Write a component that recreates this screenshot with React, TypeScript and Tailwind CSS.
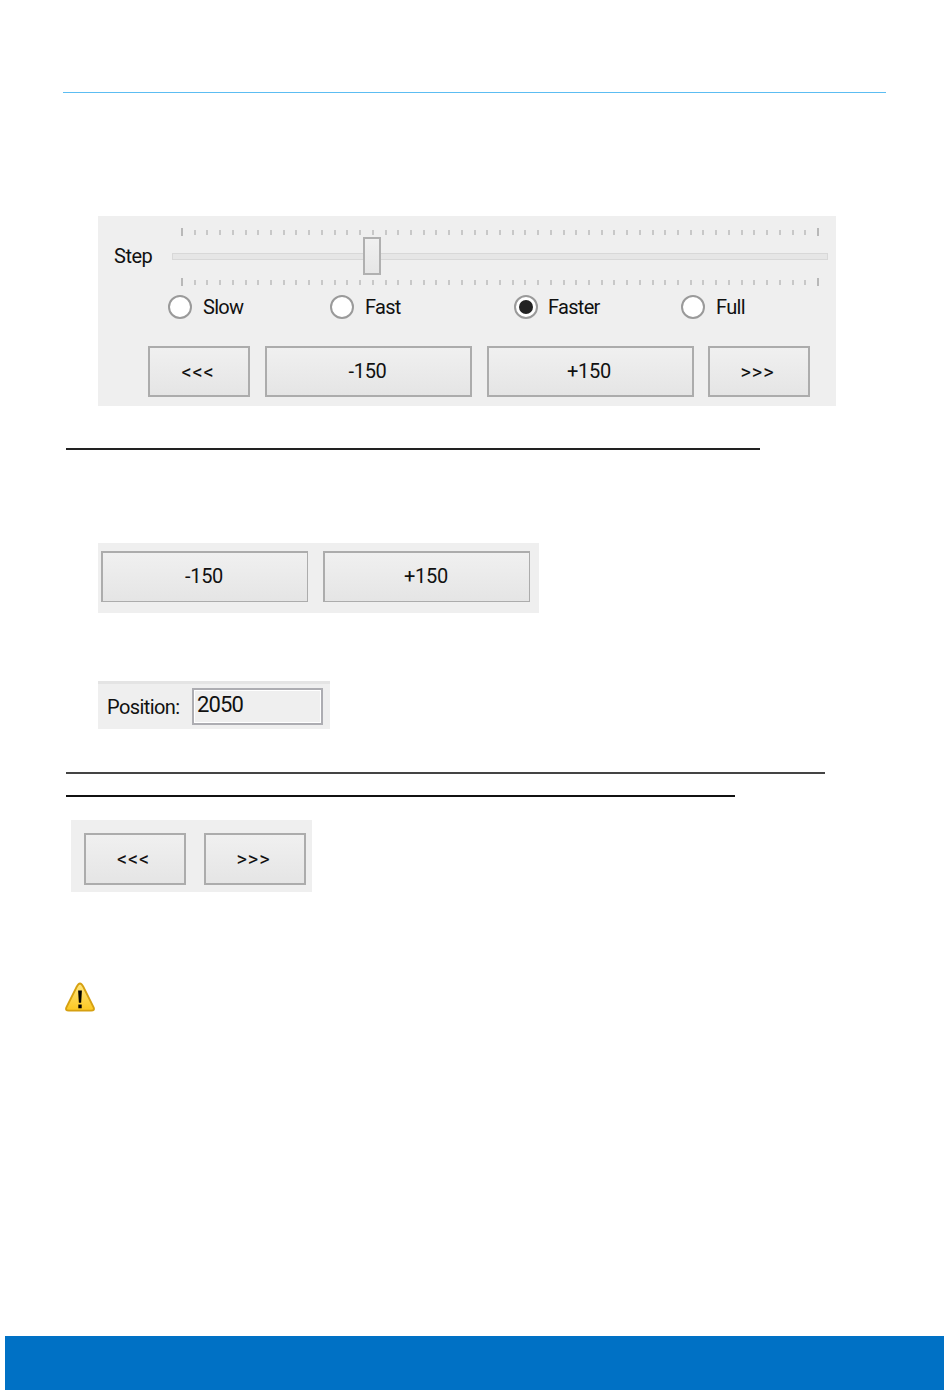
const font = "font-['Roboto',sans-serif]";

const Ticks = ({className}: {className: string}) => (
  <div className={`flex justify-between items-end px-[9px] ${className}`}>
    {Array.from({length: 51}).map((_, i) => (
      <span
        key={i}
        className={i === 0 || i === 50 ? "w-[2px] h-[8px] bg-[#b8b8b8]" : "w-[2px] h-[5px] mb-px bg-[#c8c8c8]"}
      />
    ))}
  </div>
);

const Radio = ({label, checked, className}: {label: string, checked?: boolean, className: string}) => (
  <div className={`flex items-center ${checked ? "gap-[10px]" : "gap-[11px]"} ${className}`}>
    <span className="w-[24px] h-[24px] rounded-full border-2 border-[#9a9a9a] bg-white flex items-center justify-center">
      {checked && <span className="w-[14px] h-[14px] rounded-full bg-[#222222]" />}
    </span>
    <span className="text-[20px] leading-[24px] tracking-[-0.7px] text-[#111111]">{label}</span>
  </div>
);

const Btn = ({label, className}: {label: string, className: string}) => (
  <div
    className={`h-[51px] border-2 border-[#acacac] bg-gradient-to-b from-[#f0f0f0] to-[#e5e5e5] flex items-center justify-center text-[20px] text-[#111111] ${className}`}
  >
    {label}
  </div>
);

const Warning = () => (
  <svg width="30" height="31" viewBox="0 0 32 33" className="block">
    <defs>
      <linearGradient id="warn" x1="0" y1="0" x2="0" y2="1">
        <stop offset="0" stopColor="#ffe680" />
        <stop offset="1" stopColor="#fcc820" />
      </linearGradient>
    </defs>
    <path d="M16 1.5 C17.5 1.5 18.5 3 19.5 5 L30.5 27 C31.5 29.5 30.5 30.5 28 30.5 L4 30.5 C1.5 30.5 0.5 29.5 1.5 27 L12.5 5 C13.5 3 14.5 1.5 16 1.5 Z" fill="url(#warn)" stroke="#d6a010" strokeWidth="2" />
    <path d="M14 9 H18 L17.2 22 H14.8 Z" fill="#000000" />
    <rect x="14.2" y="24" width="3.6" height="4" fill="#000000" />
  </svg>
);

export default function App() {
  return (
    <div className={`relative w-[950px] h-[1397px] bg-white overflow-hidden flex flex-col ${font}`}>
      <div className="mt-[92px] ml-[63px] w-[823px] h-px bg-[#5cbdf2]" />

      {/* first panel */}
      <div className="mt-[123px] ml-[98px] w-[738px] h-[190px] bg-[#efefef] pt-[12px]">
        <div className="flex">
          <div className="w-[74px] pl-[16px] pt-[14px] text-[20px] leading-[28px] tracking-[-0.5px] text-[#111111]">Step</div>
          <div className="w-[656px]">
            <Ticks className="h-[8px]" />
            <div className="relative h-[42px] flex items-center">
              <div className="w-full h-[7px] -mt-[2px] bg-[#e6e6e6] border border-[#d8d8d8]" />
              <div className="absolute left-[191px] top-[1px] w-[18px] h-[38px] border-2 border-[#b0b0b0] bg-gradient-to-b from-[#f0f0f0] to-[#e6e6e6]" />
            </div>
            <Ticks className="h-[8px]" />
          </div>
        </div>
        <div className="flex mt-[9px] pl-[70px]">
          <Radio label="Slow" className="w-[162px]" />
          <Radio label="Fast" className="w-[184px]" />
          <Radio label="Faster" checked className="w-[167px]" />
          <Radio label="Full" className="w-[120px]" />
        </div>
        <div className="flex mt-[27px] pl-[50px]">
          <Btn label="<<<" className="w-[102px] tracking-[0.8px] pr-[2px]" />
          <Btn label="-150" className="w-[207px] ml-[15px] tracking-[-0.3px] pr-[2px] pb-[2px]" />
          <Btn label="+150" className="w-[207px] ml-[15px] tracking-[-0.3px] pr-[3px] pb-[2px]" />
          <Btn label=">>>" className="w-[102px] ml-[14px] tracking-[0.8px] pr-[3px]" />
        </div>
      </div>

      <div className="mt-[42px] ml-[66px] w-[694px] h-[2px] bg-[#222222]" />

      {/* second panel */}
      <div className="mt-[93px] ml-[98px] w-[441px] h-[70px] bg-[#efefef] pt-[8px] pl-[3px] flex gap-[15px]">
        <Btn label="-150" className="w-[207px] border-r-[1px] border-b-[1px] tracking-[-0.3px] pr-[2px] pb-[2px]" />
        <Btn label="+150" className="w-[207px] border-r-[1px] border-b-[1px] tracking-[-0.3px] pr-[2px] pb-[2px]" />
      </div>

      {/* position */}
      <div className="mt-[68px] ml-[98px] w-[232px] h-[48px] bg-[#efefef] border-t-[3px] border-[#e4e4e4] flex items-center pl-[9px]">
        <span className="w-[85px] text-[20px] text-[#111111] tracking-[-0.6px]">Position:</span>
        <div className="w-[131px] h-[37px] border-2 border-[#adadb2] flex items-center pl-[3px] text-[22px] tracking-[-0.9px] text-[#111111] -mt-[1px] shadow-[inset_0_0_0_1px_#ffffff] pb-[3px]">2050</div>
      </div>

      <div className="mt-[43px] ml-[66px] w-[759px] h-[2px] bg-[#444444]" />
      <div className="mt-[21px] ml-[66px] w-[669px] h-[2px] bg-[#111111]" />

      {/* third panel */}
      <div className="mt-[23px] ml-[71px] w-[241px] h-[72px] bg-[#efefef] pt-[13px] pl-[13px] flex gap-[18px]">
        <Btn label="<<<" className="w-[102px] !h-[52px] tracking-[0.8px] pr-[3px]" />
        <Btn label=">>>" className="w-[102px] !h-[52px] tracking-[0.8px] pr-[3px]" />
      </div>

      <div className="mt-[90px] ml-[65px]">
        <Warning />
      </div>

      <div className="mt-[323px] ml-[5px] w-[939px] h-[54px] bg-[#0071c5]" />
    </div>
  );
}
